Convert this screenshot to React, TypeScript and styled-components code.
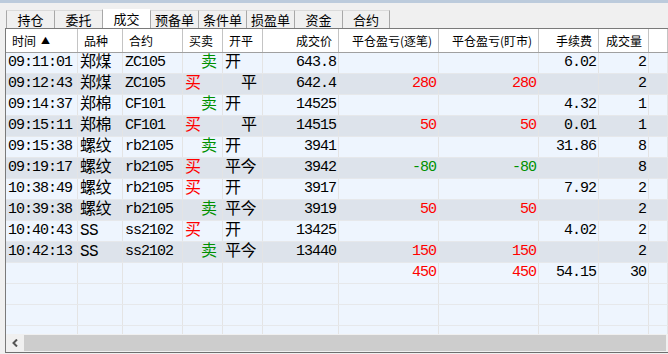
import styled, { createGlobalStyle } from 'styled-components';

const GlobalStyle = createGlobalStyle`
  html, body {
    margin: 0;
    padding: 0;
    background-color: #f0f0f0;
    overflow: hidden;
  }
  * {
    box-sizing: border-box;
  }
`;

const COLS = '72px 45px 60px 40px 40px 76px 100px 100px 60px 50px 1fr';

const Page = styled.div`
  width: 668px;
  height: 354px;
  display: flex;
  flex-direction: column;
  background-color: #f0f0f0;
  overflow: hidden;
`;

const TopStrip = styled.div`
  height: 3px;
  background-color: #bccbdc;
`;

const TabBar = styled.div`
  display: flex;
  align-items: flex-end;
  height: 25px;
  padding-left: 6px;
`;

const Tab = styled.div<{ $active?: boolean }>`
  width: 48px;
  height: ${(p) => (p.$active ? '19px' : '18px')};
  display: flex;
  align-items: center;
  justify-content: center;
  border-left: 1px solid #a8a8a8;
  border-top: 1px solid ${(p) => (p.$active ? '#ffffff' : '#dadada')};
  background-color: ${(p) => (p.$active ? '#ffffff' : '#f0f0f0')};
  font-family: 'Noto Sans CJK SC', sans-serif;
  font-size: 13px;
  line-height: 16px;
  color: #000;

  &:last-child {
    border-right: 1px solid #a8a8a8;
  }
`;

const Panel = styled.div`
  margin-left: 5px;
  height: 325px;
  display: flex;
  flex-direction: column;
  border-left: 1px solid #7a7a7a;
  border-top: 1px solid #7a7a7a;
  border-bottom: 1px solid #6e6e6e;
  overflow: hidden;
`;

const HeaderRow = styled.div`
  display: grid;
  grid-template-columns: ${COLS};
  height: 24px;
  background-color: #ffffff;
  border-bottom: 1px solid #a0a0a0;
`;

const HeadCell = styled.div<{ $align?: 'left' | 'right' }>`
  display: flex;
  align-items: center;
  justify-content: ${(p) => (p.$align === 'right' ? 'flex-end' : 'flex-start')};
  padding: 0 6px;
  border-right: 1px solid #c4c4c4;
  font-family: 'Noto Sans CJK SC', sans-serif;
  font-size: 12px;
  line-height: 16px;
  color: #000;
  white-space: nowrap;
`;

const SortMark = styled.span`
  font-size: 9px;
  margin-left: 5px;
`;

const Body = styled.div`
  height: 281px;
  overflow: hidden;
`;

const Row = styled.div<{ $shade?: boolean }>`
  display: grid;
  grid-template-columns: ${COLS};
  height: 21px;
  background-color: ${(p) => (p.$shade ? '#dde3eb' : '#eef5fe')};
  border-bottom: 1px solid #e6e8eb;
`;

const Cell = styled.div<{
  $align?: 'left' | 'right';
  $color?: string;
  $indent?: boolean;
  $cjk?: boolean;
}>`
  display: flex;
  align-items: center;
  justify-content: ${(p) => (p.$align === 'right' ? 'flex-end' : 'flex-start')};
  padding: ${(p) => (p.$align === 'right' ? '0 2px 0 0' : p.$indent ? '0 0 0 18px' : '0 0 0 2px')};
  border-right: 1px solid #e4e4e4;
  font-family: 'Liberation Mono', 'Noto Sans CJK SC', monospace;
  font-size: ${(p) => (p.$cjk ? '16px' : '15px')};
  line-height: 18px;
  letter-spacing: ${(p) => (p.$cjk ? '-0.5px' : '-1px')};
  color: ${(p) => p.$color ?? '#000'};
  white-space: nowrap;
`;

const Scrollbar = styled.div`
  height: 18px;
  display: flex;
  padding: 1px 2px 1px 0;
  background-color: #f0f0f0;
`;

const ScrollButton = styled.div`
  width: 18px;
  display: flex;
  align-items: center;
  justify-content: center;
  background-color: #f0f0f0;
`;

const ScrollThumb = styled.div`
  flex: 1;
  background-color: #cdcdcd;
`;

const RED = '#ff0000';
const GREEN = '#009000';

type Trade = {
  time: string;
  name: string;
  code: string;
  buy: boolean;
  flag: '开' | '平' | '平今';
  price: string;
  pnl?: string;
  fee?: string;
  qty: string;
};

const trades: Trade[] = [
  { time: '09:11:01', name: '郑煤', code: 'ZC105', buy: false, flag: '开', price: '643.8', fee: '6.02', qty: '2' },
  { time: '09:12:43', name: '郑煤', code: 'ZC105', buy: true, flag: '平', price: '642.4', pnl: '280', qty: '2' },
  { time: '09:14:37', name: '郑棉', code: 'CF101', buy: false, flag: '开', price: '14525', fee: '4.32', qty: '1' },
  { time: '09:15:11', name: '郑棉', code: 'CF101', buy: true, flag: '平', price: '14515', pnl: '50', fee: '0.01', qty: '1' },
  { time: '09:15:38', name: '螺纹', code: 'rb2105', buy: false, flag: '开', price: '3941', fee: '31.86', qty: '8' },
  { time: '09:19:17', name: '螺纹', code: 'rb2105', buy: true, flag: '平今', price: '3942', pnl: '-80', qty: '8' },
  { time: '10:38:49', name: '螺纹', code: 'rb2105', buy: true, flag: '开', price: '3917', fee: '7.92', qty: '2' },
  { time: '10:39:38', name: '螺纹', code: 'rb2105', buy: false, flag: '平今', price: '3919', pnl: '50', qty: '2' },
  { time: '10:40:43', name: 'SS', code: 'ss2102', buy: true, flag: '开', price: '13425', fee: '4.02', qty: '2' },
  { time: '10:42:13', name: 'SS', code: 'ss2102', buy: false, flag: '平今', price: '13440', pnl: '150', qty: '2' },
];

const tabs = ['持仓', '委托', '成交', '预备单', '条件单', '损盈单', '资金', '合约'];

function pnlColor(v?: string) {
  if (!v) return undefined;
  return v.startsWith('-') ? GREEN : RED;
}

function EmptyRow() {
  return (
    <Row>
      {Array.from({ length: 11 }).map((_, i) => (
        <Cell key={i} />
      ))}
    </Row>
  );
}

export default function App() {
  return (
    <Page>
      <GlobalStyle />
      <TopStrip />
      <TabBar>
        {tabs.map((t) => (
          <Tab key={t} $active={t === '成交'}>
            {t}
          </Tab>
        ))}
      </TabBar>
      <Panel>
        <HeaderRow>
          <HeadCell>
            时间<SortMark>▲</SortMark>
          </HeadCell>
          <HeadCell>品种</HeadCell>
          <HeadCell>合约</HeadCell>
          <HeadCell>买卖</HeadCell>
          <HeadCell>开平</HeadCell>
          <HeadCell $align="right">成交价</HeadCell>
          <HeadCell $align="right">平仓盈亏(逐笔)</HeadCell>
          <HeadCell $align="right">平仓盈亏(盯市)</HeadCell>
          <HeadCell $align="right">手续费</HeadCell>
          <HeadCell $align="right">成交量</HeadCell>
          <HeadCell />
        </HeaderRow>
        <Body>
          {trades.map((t, i) => (
            <Row key={t.time} $shade={i % 2 === 1}>
              <Cell>{t.time}</Cell>
              <Cell $cjk>{t.name}</Cell>
              <Cell>{t.code}</Cell>
              <Cell $cjk $color={t.buy ? RED : GREEN} $indent={!t.buy}>
                {t.buy ? '买' : '卖'}
              </Cell>
              <Cell $cjk $indent={t.flag === '平'}>
                {t.flag}
              </Cell>
              <Cell $align="right">{t.price}</Cell>
              <Cell $align="right" $color={pnlColor(t.pnl)}>
                {t.pnl}
              </Cell>
              <Cell $align="right" $color={pnlColor(t.pnl)}>
                {t.pnl}
              </Cell>
              <Cell $align="right">{t.fee}</Cell>
              <Cell $align="right">{t.qty}</Cell>
              <Cell />
            </Row>
          ))}
          <Row>
            <Cell />
            <Cell />
            <Cell />
            <Cell />
            <Cell />
            <Cell />
            <Cell $align="right" $color={RED}>
              450
            </Cell>
            <Cell $align="right" $color={RED}>
              450
            </Cell>
            <Cell $align="right">54.15</Cell>
            <Cell $align="right">30</Cell>
            <Cell />
          </Row>
          <EmptyRow />
          <EmptyRow />
          <EmptyRow />
        </Body>
        <Scrollbar>
          <ScrollButton>
            <svg width="6" height="8" viewBox="0 0 6 8">
              <path d="M5 0.5 L1.5 4 L5 7.5" fill="none" stroke="#555" strokeWidth="2" />
            </svg>
          </ScrollButton>
          <ScrollThumb />
        </Scrollbar>
      </Panel>
    </Page>
  );
}
